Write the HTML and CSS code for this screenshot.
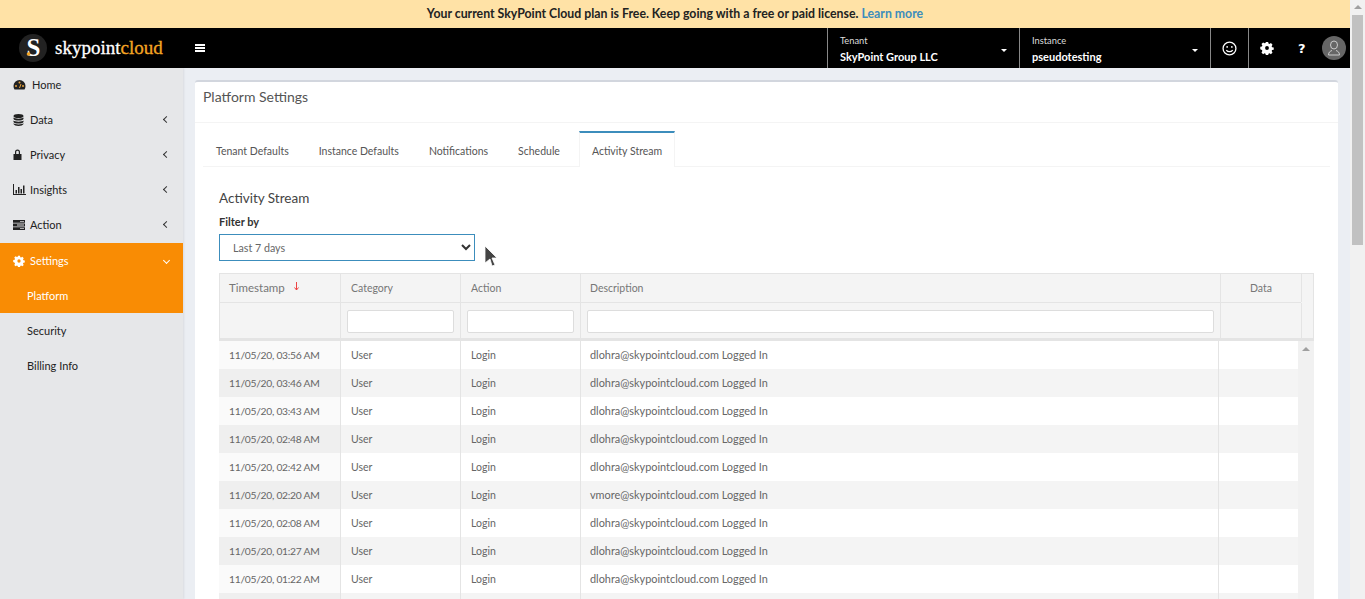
FILE: index.html
```html
<!DOCTYPE html>
<html lang="en">
<head>
    <meta charset="UTF-8">
    <title>Platform Settings</title>
    <link rel="stylesheet" href="styles.css">
</head>
<body>
<div class="page">
    <div class="app">
        <div class="banner">Your current SkyPoint Cloud plan is Free. Keep going with a free or paid license. <a href="#">Learn more</a></div>
        <header class="topbar">
            <div class="brand">
                <svg class="brand-mark" width="28" height="28" viewBox="0 0 28 28"><circle cx="14" cy="14" r="14" fill="#222"/><text x="14.500" y="22" text-anchor="middle" class="brand-s">S</text><circle cx="9.500" cy="20" r="1.800" fill="#f5a623"/></svg>
                <span class="brand-name">skypoint<span class="brand-cloud">cloud</span></span>
            </div>
            <div class="burger"><i></i><i></i><i></i></div>
            <div class="picker tenant">
                <small>Tenant</small>
                <b>SkyPoint Group LLC</b>
                <span class="caret"></span>
            </div>
            <div class="picker instance">
                <small>Instance</small>
                <b>pseudotesting</b>
                <span class="caret"></span>
            </div>
            <div class="top-icon smile">
                <svg width="15" height="15" viewBox="0 0 14 14" fill="none" stroke="#fff" stroke-width="1.200"><circle cx="7" cy="7" r="6"/><circle cx="4.800" cy="5.500" r=".8" fill="#fff" stroke="none"/><circle cx="9.200" cy="5.500" r=".8" fill="#fff" stroke="none"/><path d="M4 8.500c1.500 2 4.500 2 6 0"/></svg>
            </div>
            <div class="top-tools">
                <svg width="14" height="14" viewBox="-1 -1 16 16"><path fill="#fff" fill-rule="evenodd" d="M5.700 0h2.600l.4 1.900 1.100.5 1.700-1 1.800 1.800-1 1.700.5 1.100 1.900.4v2.600l-1.900.4-.5 1.100 1 1.700-1.800 1.800-1.700-1-1.100.5-.4 1.900H5.700l-.4-1.900-1.100-.5-1.700 1-1.800-1.800 1-1.700-.5-1.100L-.7 8.300V5.700l1.900-.4.5-1.100-1-1.700L2.500 .7l1.700 1 1.100-.5zM7 4.800a2.200 2.200 0 1 0 0 4.400 2.200 2.200 0 0 0 0-4.400z"/></svg>
                <span class="help">?</span>
                <span class="avatar">
                    <svg width="14" height="16" viewBox="0 0 14 16" fill="none" stroke="#ccc" stroke-width="1"><ellipse cx="7" cy="5" rx="3.500" ry="4"/><path d="M1.500 15c0-3 2-4 3.500-4.500M12.500 15c0-3-2-4-3.500-4.500M1.500 15h11"/></svg>
                </span>
            </div>
        </header>
        <div class="body-row">
            <nav class="sidebar">
                <a class="nav-item" href="#"><svg class="nav-icon" width="13" height="12" viewBox="0 0 13 12" preserveAspectRatio="xMinYMid"><path fill="#222" d="M6.500 1A6 6 0 0 0 .5 7c0 1.400.4 2.500 1 3.500h10c.6-1 1-2.100 1-3.500a6 6 0 0 0-6-6z"/><circle cx="3" cy="7" r="1" fill="#e8a33d"/><circle cx="6.500" cy="3.500" r="1" fill="#e8a33d"/><circle cx="10" cy="7" r="1" fill="#e8a33d"/><path stroke="#e8a33d" d="M6.500 9 8 5"/></svg><span class="nav-home">Home</span></a>
                <a class="nav-item" href="#"><svg class="nav-icon" width="11" height="12" viewBox="0 0 11 12" preserveAspectRatio="xMinYMid"><ellipse cx="5.500" cy="2" rx="5" ry="2" fill="#222"/><path fill="#222" d="M.5 3.500c1 1.500 9 1.500 10 0V5c-1 2-9 2-10 0zM.5 6.500c1 1.500 9 1.500 10 0V8c-1 2-9 2-10 0zM.5 9.300c1 1.500 9 1.500 10 0V10c-1 2.500-9 2.500-10 0z"/></svg>Data<span class="chev"></span></a>
                <a class="nav-item" href="#"><svg class="nav-icon" width="9" height="11" viewBox="0 0 9 11" preserveAspectRatio="xMinYMid"><path fill="#222" d="M2 5V3a2.500 2.500 0 0 1 5 0v2h1.500v6H.5V5zm1.200 0h2.600V3a1.300 1.300 0 0 0-2.600 0z"/></svg>Privacy<span class="chev"></span></a>
                <a class="nav-item" href="#"><svg class="nav-icon" width="13" height="11" viewBox="0 0 13 11" preserveAspectRatio="xMinYMid"><path fill="#222" d="M0 0h1v10h12v1H0zM2.500 6h1.500v3.500H2.500zM5 3h1.500v6.500H5zM7.500 5H9v4.500H7.500zM10 1.500h1.500v8H10z"/></svg>Insights<span class="chev"></span></a>
                <a class="nav-item" href="#"><svg class="nav-icon" width="12" height="10" viewBox="0 0 12 10" preserveAspectRatio="xMinYMid"><path fill="#222" d="M0 0h12v2.800H0zM0 3.600h12v2.800H0zM0 7.200h12V10H0z"/><path fill="#ddd" d="M7 1h4v.8H7zM4 4.600h7v.8H4zM7 8.200h4V9H7z"/></svg>Action<span class="chev"></span></a>
                <div class="nav-open">
                    <a class="nav-item" href="#"><svg class="nav-icon" width="12" height="12" viewBox="-1 -1 16 16" preserveAspectRatio="xMinYMid"><path fill="#fff" fill-rule="evenodd" d="M5.700 0h2.600l.4 1.900 1.100.5 1.700-1 1.800 1.800-1 1.700.5 1.100 1.900.4v2.600l-1.900.4-.5 1.100 1 1.700-1.800 1.800-1.700-1-1.100.5-.4 1.900H5.700l-.4-1.900-1.100-.5-1.700 1-1.800-1.800 1-1.700-.5-1.100L-.7 8.300V5.700l1.900-.4.5-1.100-1-1.700L2.500 .7l1.700 1 1.100-.5zM7 4.800a2.200 2.200 0 1 0 0 4.400 2.200 2.200 0 0 0 0-4.400z"/></svg>Settings<span class="chev down"></span></a>
                    <a class="nav-sub" href="#">Platform</a>
                </div>
                <a class="nav-sub" href="#">Security</a>
                <a class="nav-sub" href="#">Billing Info</a>
            </nav>
            <main class="content">
                <section class="card">
                    <h1 class="card-title">Platform Settings</h1>
                    <div class="card-body">
                        <div class="tabs">
                            <a href="#">Tenant Defaults</a>
                            <a href="#">Instance Defaults</a>
                            <a href="#">Notifications</a>
                            <a href="#">Schedule</a>
                            <a href="#" class="active">Activity Stream</a>
                        </div>
                        <div class="pane">
                            <h2>Activity Stream</h2>
                            <label class="filter-label">Filter by</label>
                            <div class="filter-row">
                                <div class="select">Last 7 days
                                    <svg width="10" height="7" viewBox="0 0 10 7" fill="none" stroke="#333" stroke-width="2"><path d="M1 1l4 4 4-4"/></svg>
                                </div>
                                <svg class="cursor" width="14" height="22" viewBox="0 0 14 22"><path fill="#444" stroke="#fff" stroke-width=".8" d="M1 1l12 12H8l3 7-3 1-2-7-5 4z"/></svg>
                            </div>
                            <div class="grid">
                                <div class="grid-head">
                                    <div class="cols">
                                        <div class="cell c1">Timestamp <svg class="sort" width="5" height="9" viewBox="0 0 5 9" fill="none" stroke="#e44"><path d="M2.500 0v8M.5 5.500l2 2.500 2-2.500"/></svg></div>
                                        <div class="cell c2">Category</div>
                                        <div class="cell c3">Action</div>
                                        <div class="cell c4">Description</div>
                                        <div class="cell c5">Data</div>
                                    </div>
                                    <div class="cols filters">
                                        <div class="cell c1"></div>
                                        <div class="cell c2"><input type="text"></div>
                                        <div class="cell c3"><input type="text"></div>
                                        <div class="cell c4"><input type="text"></div>
                                        <div class="cell c5"></div>
                                    </div>
                                </div>
                                <div class="grid-wrap">
                                    <div class="rows" id="rows"></div>
                                    <div class="grid-scroll"><span class="up"></span></div>
                                </div>
                            </div>
                        </div>
                    </div>
                </section>
            </main>
        </div>
    </div>
    <div class="page-scroll"><span class="up"></span><div class="thumb"></div></div>
</div>
<script src="rows.js"></script>
</body>
</html>
```

FILE: rows.js
```js
// activity rows shown in the grid
var rows = [
    ['11/05/20, 03:56 AM', 'dlohra'],
    ['11/05/20, 03:46 AM', 'dlohra'],
    ['11/05/20, 03:43 AM', 'dlohra'],
    ['11/05/20, 02:48 AM', 'dlohra'],
    ['11/05/20, 02:42 AM', 'dlohra'],
    ['11/05/20, 02:20 AM', 'vmore'],
    ['11/05/20, 02:08 AM', 'dlohra'],
    ['11/05/20, 01:27 AM', 'dlohra'],
    ['11/05/20, 01:22 AM', 'dlohra'],
    ['', '']
];
var html = '';
rows.forEach(function (r) {
    var desc = r[1] ? r[1] + '@skypointcloud.com Logged In' : '';
    html += '<div class="cols row">' +
        '<div class="cell c1">' + r[0] + '</div>' +
        '<div class="cell c2">' + (r[0] ? 'User' : '') + '</div>' +
        '<div class="cell c3">' + (r[0] ? 'Login' : '') + '</div>' +
        '<div class="cell c4">' + desc + '</div>' +
        '<div class="cell c5"></div></div>';
});
document.getElementById('rows').innerHTML = html;
```

FILE: styles.css
```css
* {
    box-sizing: border-box;
}
html, body {
    margin: 0;
    height: 100%;
    overflow: hidden;
}
body {
    font-family: Lato, sans-serif;
    font-size: 11px;
    color: #666;
    background-color: #ebeef3;
}
a {
    text-decoration: none;
    color: inherit;
}
.page {
    display: flex;
    height: 599px;
}
.app {
    flex: 1;
    min-width: 0;
    display: flex;
    flex-direction: column;
}

/* banner + top bar */
.banner {
    height: 28px;
    line-height: 27px;
    background-color: #ffe2a6;
    color: #222;
    text-align: center;
    font-size: 12.300px;
    font-weight: 700;
}
.banner a {
    color: #3c8dbc;
}
.topbar {
    height: 40px;
    background-color: #000;
    display: flex;
    align-items: stretch;
    color: #fff;
}
.brand {
    width: 183px;
    display: flex;
    align-items: center;
    padding-left: 19px;
}
.brand-s {
    font-family: "Liberation Serif", serif;
    font-size: 25px;
    font-weight: bold;
    fill: #fff;
}
.brand-name {
    font-family: "Liberation Serif", serif;
    font-size: 19px;
    margin-left: 8px;
    -webkit-text-stroke: 0.3px;
}
.brand-cloud {
    color: #f5a623;
}
.burger {
    width: 644px;
    padding: 16px 0 0 12px;
}
.burger i {
    display: block;
    width: 10px;
    height: 2px;
    background-color: #fff;
    margin-bottom: 1px;
}
.picker {
    position: relative;
    width: 191px;
    border-left: 1px solid #888;
    padding: 7px 0 0 12px;
}
.picker.tenant {
    width: 192px;
}
.picker small {
    display: block;
    font-size: 9.300px;
    line-height: 12px;
    color: #ddd;
}
.picker b {
    display: block;
    font-size: 11px;
    line-height: 20px;
}
.caret {
    position: absolute;
    right: 12px;
    top: 21px;
    border-top: 3px solid #fff;
    border-left: 3px solid transparent;
    border-right: 3px solid transparent;
}
.top-icon {
    width: 39px;
    border-left: 1px solid #888;
    border-right: 1px solid #888;
    display: flex;
    align-items: center;
    justify-content: center;
}
.top-tools {
    flex: 1;
    display: flex;
    align-items: center;
    padding-left: 11px;
}
.help {
    font-family: "DejaVu Sans", sans-serif;
    font-weight: 700;
    font-size: 13px;
    margin-left: 24px;
    width: 8px;
}
.avatar {
    width: 24px;
    height: 24px;
    border-radius: 50%;
    background-color: #666;
    margin-left: 16px;
    display: flex;
    align-items: center;
    justify-content: center;
}

/* sidebar */
.body-row {
    flex: 1;
    min-height: 0;
    display: flex;
}
.sidebar {
    width: 183px;
    background-color: #e6e7e9;
    color: #222;
    box-shadow: 1px 0 2px rgba(0, 0, 0, 0.08);
}
.nav-item {
    display: flex;
    align-items: center;
    height: 35px;
    padding: 0 14px 2px 13px;
}
.nav-open .nav-item {
    padding-bottom: 0;
}
.nav-icon {
    width: 13px;
    margin-right: 4px;
}
.nav-home {
    margin-left: 2px;
}
.chev {
    margin-left: auto;
    width: 5px;
    height: 5px;
    border-left: 1px solid #333;
    border-bottom: 1px solid #333;
    transform: rotate(45deg);
}
.chev.down {
    border-color: #fff;
    transform: rotate(-45deg);
}
.nav-sub {
    display: block;
    height: 35px;
    line-height: 35px;
    padding-left: 27px;
}
.nav-open {
    background-color: #f98c04;
    color: #fff;
}

/* main card */
.content {
    flex: 1;
    min-width: 0;
    padding: 12px 12px 0 12px;
}
.card {
    height: 100%;
    background-color: #fff;
    border-top: 2px solid #d2d6de;
    border-radius: 3px 3px 0 0;
}
.card-title {
    margin: 0;
    height: 41px;
    line-height: 29px;
    padding-left: 8px;
    font-size: 14px;
    font-weight: 400;
    color: #555;
    border-bottom: 1px solid #f4f4f4;
}
.card-body {
    padding: 8px 8px 0 8px;
}
.tabs {
    display: flex;
    height: 36px;
    border-bottom: 1px solid #f4f4f4;
    font-size: 10.500px;
}
.tabs a {
    padding: 0 13px;
    margin-right: 4px;
    line-height: 41px;
    color: #555;
}
.tabs a.active {
    padding: 0 12px;
    border-top: 2px solid #3c8dbc;
    border-left: 1px solid #f4f4f4;
    border-right: 1px solid #f4f4f4;
    background-color: #fff;
    height: 36px;
    line-height: 36px;
    margin: 0 0 0 2px;
}
.pane {
    padding: 0 16px;
}
.pane h2 {
    margin: 22px 0 0 0;
    font-size: 13.500px;
    line-height: 18px;
    font-weight: 400;
    color: #444;
}
.filter-label {
    display: block;
    margin-top: 8px;
    font-weight: 700;
    line-height: 14px;
    color: #333;
}
.filter-row {
    display: flex;
    height: 27px;
    margin-top: 5px;
}
.select {
    width: 256px;
    height: 27px;
    border: 1px solid #3c8dbc;
    padding-left: 13px;
    font-size: 10.700px;
    line-height: 25px;
    display: flex;
    justify-content: space-between;
    align-items: center;
}
.select svg {
    margin-right: 3px;
}
.cursor {
    margin: 11px 0 0 9px;
}

/* grid */
.grid {
    margin-top: 12px;
    color: #777;
}
.grid-head {
    background-color: #f4f4f4;
    border: 1px solid #e4e4e4;
    border-bottom: 3px solid #e4e4e4;
    padding-right: 12px;
    font-size: 10.500px;
}
.grid-head .c1 {
    font-size: 11.500px;
    padding-left: 9px;
}
.cols {
    display: flex;
}
.cell {
    flex: none;
    border-right: 1px solid #e4e4e4;
    padding-left: 10px;
}
.c1 { width: 121px; }
.c2 { width: 120px; }
.c3 { width: 120px; }
.c4 { width: 640px; padding-left: 9px; }
.c5 { width: 81px; text-align: center; padding: 0; }
.grid-head .cols:first-child {
    height: 29px;
    line-height: 28px;
    border-bottom: 1px solid #e4e4e4;
}
.filters {
    height: 35px;
}
.filters .cell {
    padding: 7px 6px 0 6px;
}
.filters input {
    display: block;
    width: 100%;
    height: 23px;
    border: 1px solid #ddd;
    border-radius: 2px;
    background-color: #fff;
}
.sort {
    margin-left: 6px;
    vertical-align: 1px;
}
.grid-wrap {
    display: flex;
}
.rows {
    flex: 1;
    min-width: 0;
}
.row {
    height: 28px;
    line-height: 28px;
    color: #666;
    font-size: 10.500px;
}
.row .c1 {
    width: 122px;
    padding-left: 10px;
    font-size: 10.300px;
    letter-spacing: -0.270px;
    background-color: rgba(0, 0, 0, 0.02);
}
.row .c4 {
    width: 638px;
    font-size: 10.900px;
}
.row .c5 { width: 79px; border-right: 0; }
.row:nth-child(even) {
    background-color: #f4f4f4;
}
.grid-scroll {
    width: 16px;
    background-color: #f1f1f1;
    padding-top: 6px;
}
.up {
    display: block;
    width: 0;
    margin: 0 auto;
    border-bottom: 4px solid #a0a0a0;
    border-left: 4px solid transparent;
    border-right: 4px solid transparent;
}

/* page scrollbar */
.page-scroll {
    width: 15px;
    background-color: #f1f1f1;
    padding-top: 5px;
}
.thumb {
    height: 230px;
    margin: 6px 2px 0 2px;
    background-color: #c1c1c1;
}
```
